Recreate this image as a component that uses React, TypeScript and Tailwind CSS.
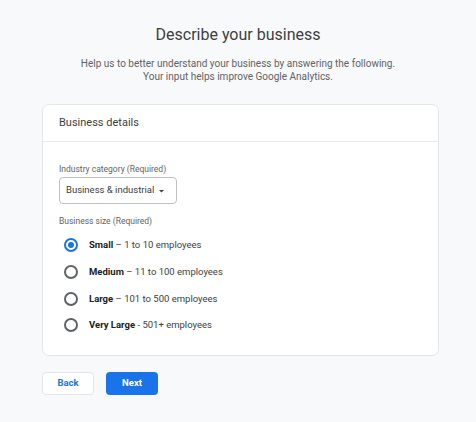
import React, { useState } from 'react';

const sizes = [
    { id: 'small', name: 'Small', sep: '–', range: '1 to 10 employees' },
    { id: 'medium', name: 'Medium', sep: '–', range: '11 to 100 employees' },
    { id: 'large', name: 'Large', sep: '–', range: '101 to 500 employees' },
    { id: 'xlarge', name: 'Very Large', sep: '-', range: '501+ employees' },
];

const Radio: React.FC<{ checked: boolean }> = ({ checked }) => (
    <span
        className={`w-[14px] h-[14px] rounded-full border-2 flex items-center justify-center flex-shrink-0 ${
            checked ? 'border-[#1a73e8]' : 'border-[#5f6368]'
        }`}
    >
        {checked && <span className="w-[6px] h-[6px] rounded-full bg-[#1a73e8]" />}
    </span>
);

const App: React.FC = () => {
    const [size, setSize] = useState('small');

    return (
        <div className="w-[476px] h-[422px] bg-[#f8f9fa] font-['Roboto',sans-serif] overflow-hidden">
            {/* Heading */}
            <div className="pt-[24px] text-center">
                <h1 className="text-[16px] leading-[22px] text-[#3c4043]">Describe your business</h1>
                <p className="mt-[11px] text-[10px] leading-[13px] text-[#5f6368]">
                    Help us to better understand your business by answering the following.
                    <br />
                    Your input helps improve Google Analytics.
                </p>
            </div>

            {/* Card */}
            <div className="mt-[21px] mx-[42px] w-[397px] bg-white border border-[#e4e6e8] rounded-[7px]">
                <div className="h-[37px] px-[16px] flex items-center border-b border-[#e8eaed]">
                    <span className="text-[11px] text-[#3c4043]">Business details</span>
                </div>

                <div className="px-[16px] pt-[22px] pb-[16px]">
                    <div className="text-[8.5px] leading-[10px] text-[#5f6368]">Industry category (Required)</div>
                    <button className="mt-[3px] h-[27px] w-[118px] px-[6px] flex items-center gap-[5px] border border-[#bdc1c6] rounded-[4px] text-[9.5px] text-[#3c4043]">
                        Business &amp; industrial
                        <svg width="5" height="3" viewBox="0 0 5 3" className="mt-[1px]">
                            <path d="M0 0 L5 0 L2.5 2.5 Z" fill="#3c4043" />
                        </svg>
                    </button>

                    <div className="mt-[12px] text-[8.5px] leading-[10px] text-[#5f6368]">Business size (Required)</div>

                    <div className="mt-[6px] flex flex-col">
                        {sizes.map((s) => (
                            <label
                                key={s.id}
                                onClick={() => setSize(s.id)}
                                className="h-[26.7px] pl-[5px] flex items-center gap-[11px] cursor-pointer"
                            >
                                <Radio checked={size === s.id} />
                                <span className="text-[9.5px] text-[#3c4043]">
                                    <span className="font-bold text-[#202124]">{s.name}</span> {s.sep} {s.range}
                                </span>
                            </label>
                        ))}
                    </div>
                </div>
            </div>

            {/* Actions */}
            <div className="mt-[16px] ml-[42px] flex gap-[12px]">
                <button className="w-[52px] h-[23px] bg-white border border-[#e4e6e8] rounded-[4px] text-[9.5px] font-bold text-[#1a73e8]">
                    Back
                </button>
                <button className="w-[52px] h-[23px] bg-[#1a73e8] rounded-[4px] text-[9.5px] font-bold text-white">
                    Next
                </button>
            </div>
        </div>
    );
};

export default App;
